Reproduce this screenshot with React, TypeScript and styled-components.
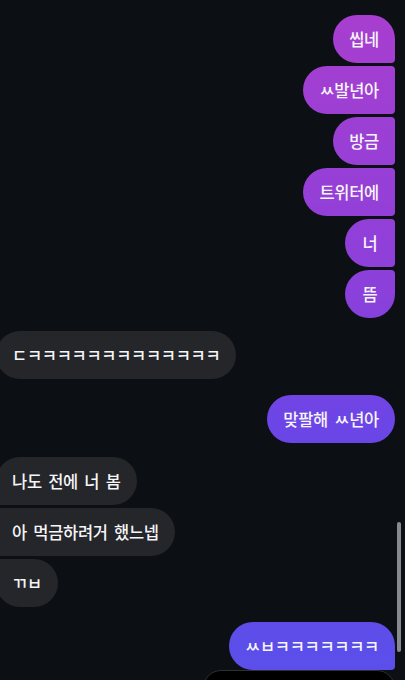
import React from "react";
import styled, { createGlobalStyle, css } from "styled-components";

const GlobalStyle = createGlobalStyle`
  html, body {
    margin: 0;
    padding: 0;
    background: #0c0f13;
  }
  body {
    font-family: "Noto Sans CJK KR", "Noto Sans", sans-serif;
  }
`;

type Side = "in" | "out";
type Pos = "single" | "first" | "middle" | "last";

const Page = styled.div`
  position: relative;
  width: 405px;
  height: 680px;
  overflow: hidden;
  background: #0c0f13;
  padding-top: 15px;
  box-sizing: border-box;
  display: flex;
  flex-direction: column;
`;

const Group = styled.div<{ $side: Side; $gap: number }>`
  display: flex;
  flex-direction: column;
  gap: 3px;
  align-items: ${(p) => (p.$side === "out" ? "flex-end" : "flex-start")};
  padding-right: ${(p) => (p.$side === "out" ? "10px" : "0")};
  margin-left: ${(p) => (p.$side === "in" ? "-4px" : "0")};
  margin-bottom: ${(p) => p.$gap}px;
`;

const R = 24;
const r = 4;

const radius = (side: Side, pos: Pos) => {
  const top = pos === "single" || pos === "first" ? R : r;
  const bottom = pos === "single" || pos === "last" ? R : r;
  if (side === "out") return `${R}px ${top}px ${bottom}px ${R}px`;
  return `${top}px ${R}px ${R}px ${bottom}px`;
};

const Bubble = styled.div<{ $side: Side; $pos: Pos }>`
  box-sizing: border-box;
  height: 48px;
  min-width: 50px;
  padding: 0 16px;
  display: flex;
  align-items: center;
  justify-content: center;
  font-size: 16.5px;
  line-height: 20px;
  font-weight: 500;
  letter-spacing: -0.3px;
  word-spacing: 3px;
  color: #f6f5f8;
  white-space: nowrap;
  border-radius: ${(p) => radius(p.$side, p.$pos)};
  ${(p) =>
    p.$side === "out"
      ? css`
          background: linear-gradient(
            180deg,
            #a93ecf 0%,
            #8a40db 44%,
            #6c45e6 62%,
            #5a4fea 100%
          );
          background-attachment: fixed;
        `
      : css`
          background: #24262a;
        `}
`;

const Scrollbar = styled.div`
  position: absolute;
  right: 4px;
  top: 522px;
  width: 4px;
  height: 130px;
  border-radius: 2px;
  background: #878a90;
`;

const Composer = styled.div`
  position: absolute;
  left: 203px;
  right: 10px;
  bottom: -30px;
  height: 38px;
  border-radius: 18px;
  background: #000;
  border: 1px solid #2e3034;
`;

type G = { side: Side; gap: number; msgs: string[]; lastOpen?: boolean };

const groups: G[] = [
  { side: "out", gap: 13, msgs: ["씹네", "ㅆ발년아", "방금", "트위터에", "너", "뜸"] },
  { side: "in", gap: 16, msgs: ["ㄷㅋㅋㅋㅋㅋㅋㅋㅋㅋㅋㅋㅋㅋ"] },
  { side: "out", gap: 14, msgs: ["맞팔해 ㅆ년아"] },
  { side: "in", gap: 15, msgs: ["나도 전에 너 봄", "아 먹금하려거 했느넵", "ㄲㅂ"] },
  { side: "out", gap: 0, msgs: ["ㅆㅂㅋㅋㅋㅋㅋㅋㅋ"], lastOpen: true },
];

const posOf = (i: number, n: number, open?: boolean): Pos => {
  const total = open ? n + 1 : n;
  if (total === 1) return "single";
  if (i === 0) return "first";
  if (i === total - 1) return "last";
  return "middle";
};

export default function App() {
  return (
    <>
      <GlobalStyle />
      <Page>
        {groups.map((g, gi) => (
          <Group key={gi} $side={g.side} $gap={g.gap}>
            {g.msgs.map((m, i) => (
              <Bubble key={i} $side={g.side} $pos={posOf(i, g.msgs.length, g.lastOpen)}>
                {m}
              </Bubble>
            ))}
          </Group>
        ))}
        <Scrollbar />
        <Composer />
      </Page>
    </>
  );
}
